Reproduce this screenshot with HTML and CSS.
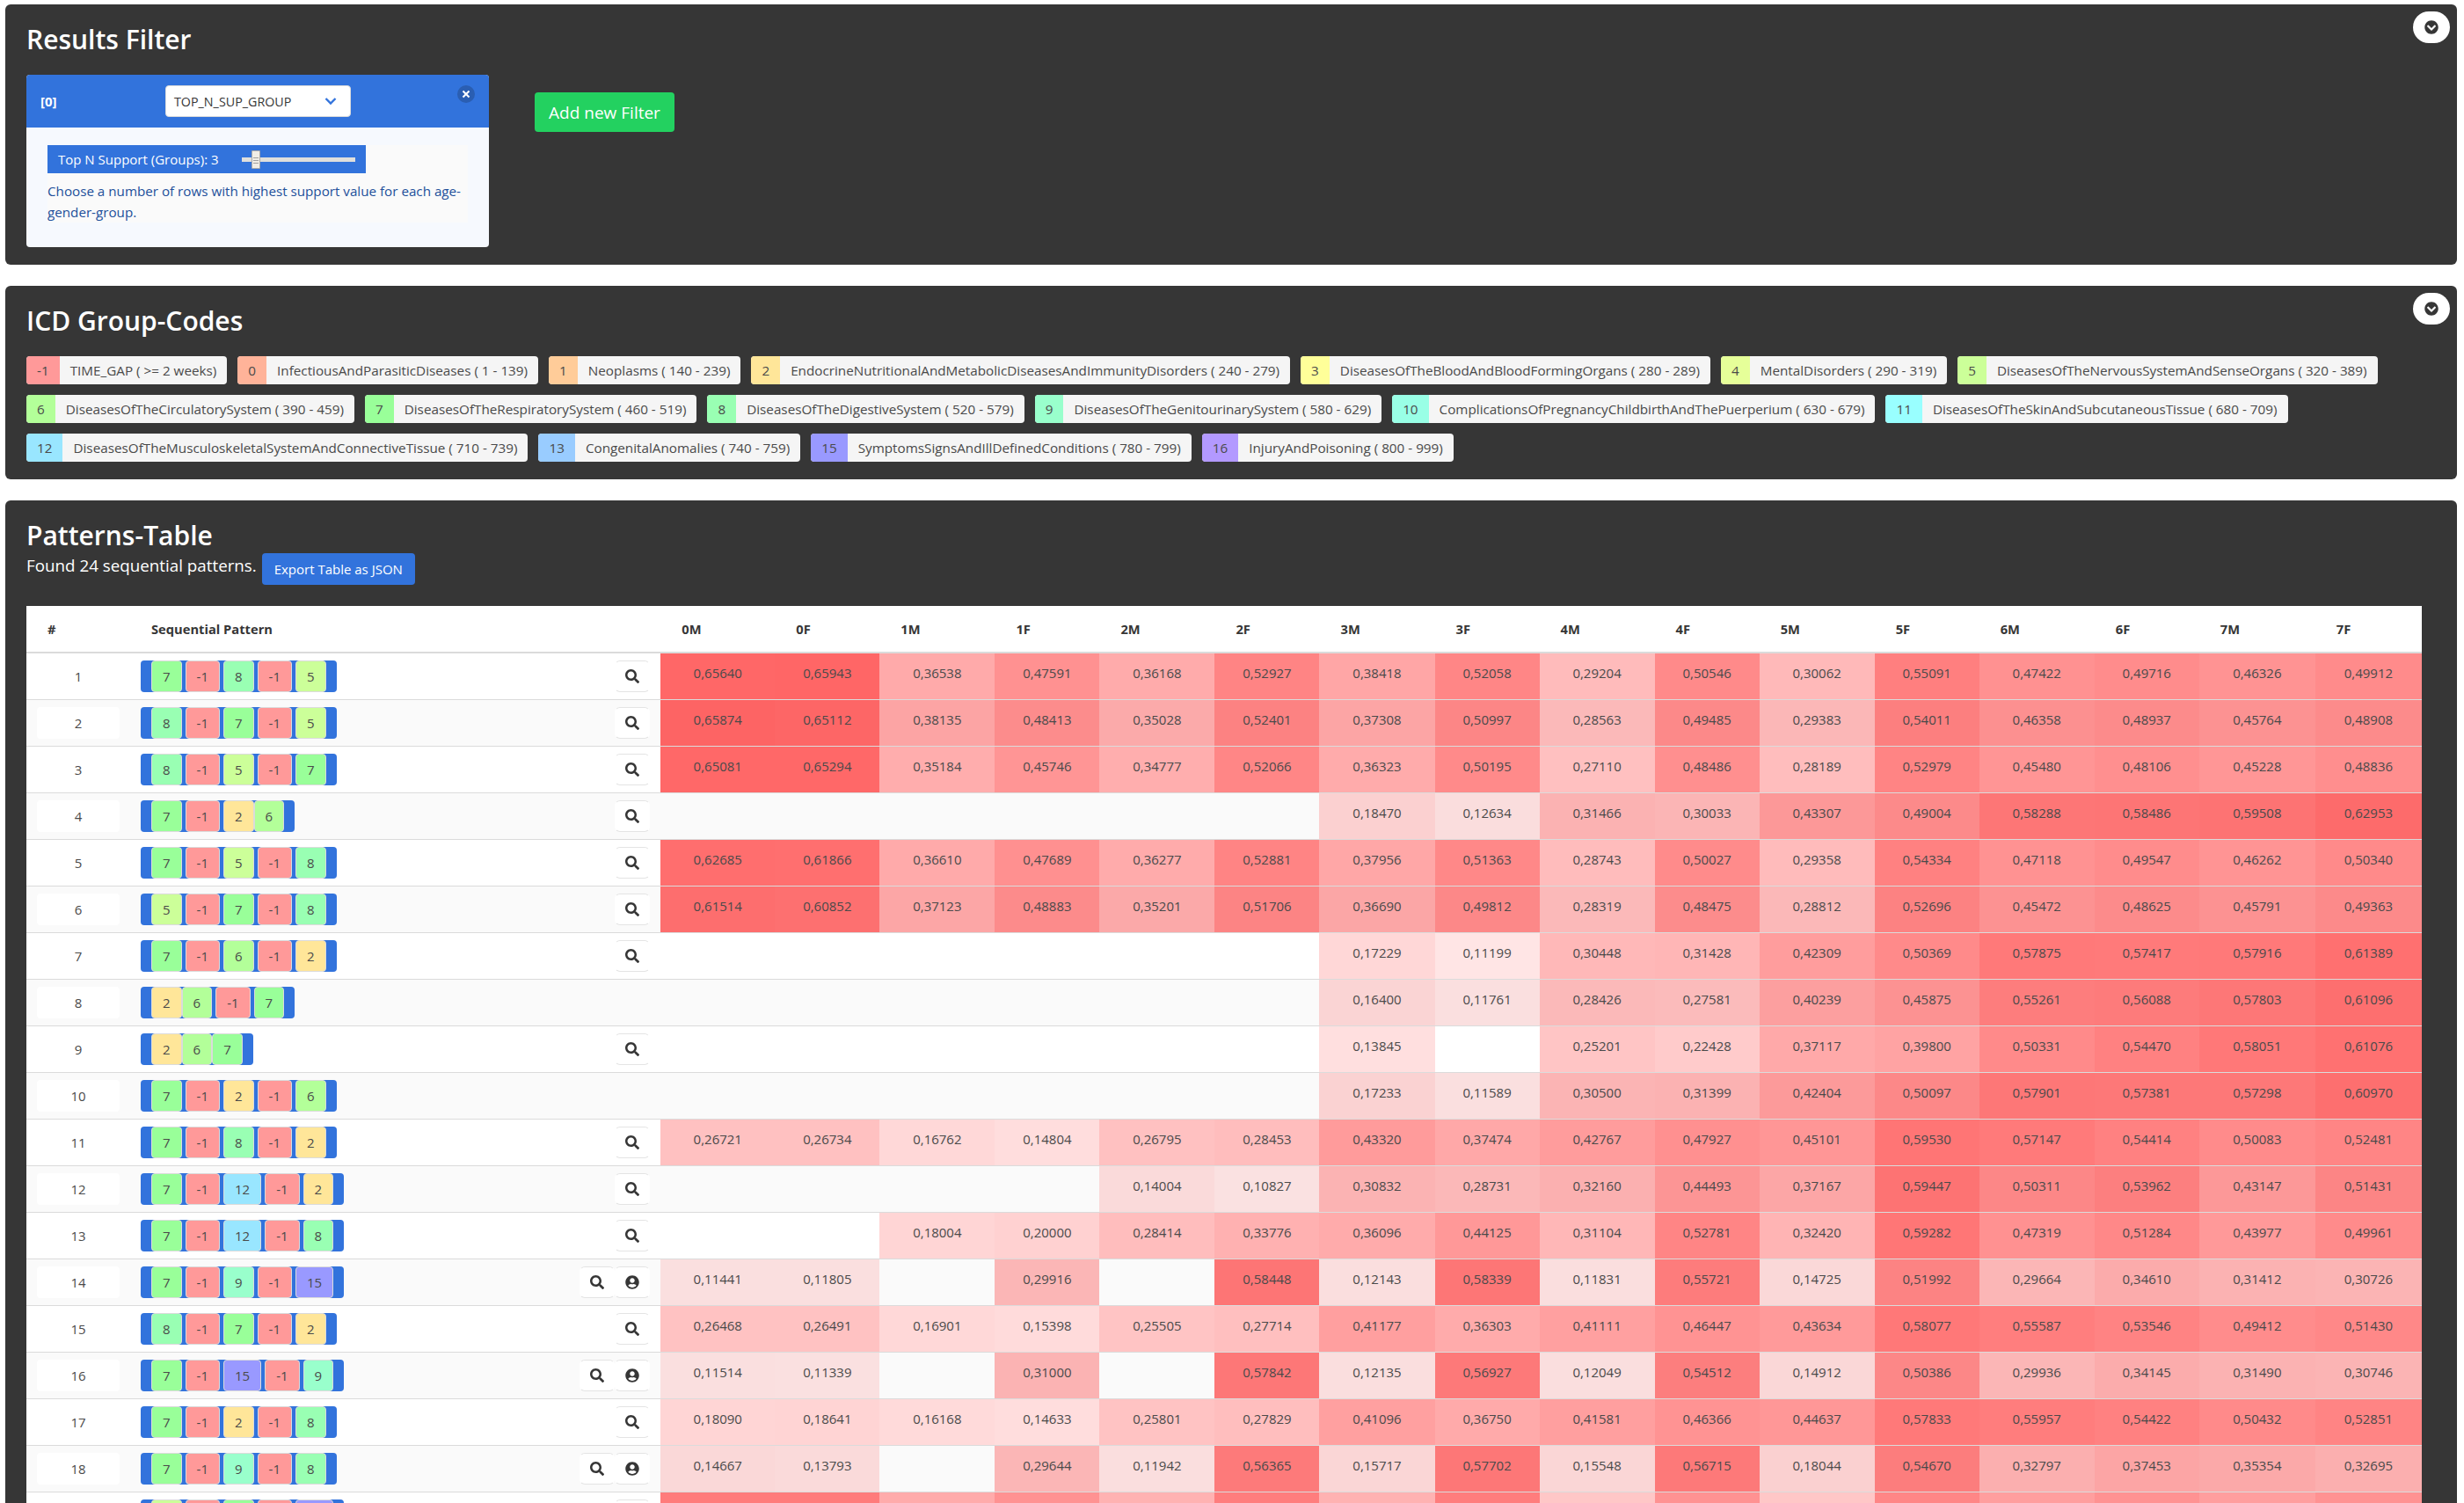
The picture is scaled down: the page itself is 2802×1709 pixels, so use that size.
FILE: index.html
```html
<!DOCTYPE html>
<html lang="en">
<head>
    <meta charset="UTF-8">
    <title>Sequential Patterns</title>
    <link rel="stylesheet" href="styles.css">
</head>
<body>
    <svg class="icon-defs" width="0" height="0">
        <symbol id="i-search" viewBox="0 0 512 512"><path d="M505 442.7L405.3 343c-4.5-4.5-10.6-7-17-7H372c27.6-35.3 44-79.7 44-128C416 93.1 322.9 0 208 0S0 93.1 0 208s93.1 208 208 208c48.3 0 92.7-16.4 128-44v16.3c0 6.4 2.5 12.5 7 17l99.7 99.7c9.4 9.4 24.6 9.4 33.9 0l28.3-28.3c9.4-9.4 9.4-24.6.1-34zM208 336c-70.7 0-128-57.2-128-128 0-70.7 57.2-128 128-128 70.7 0 128 57.2 128 128 0 70.7-57.2 128-128 128z"/></symbol>
        <symbol id="i-user" viewBox="0 0 496 512"><path d="M248 8C111 8 0 119 0 256s111 248 248 248 248-111 248-248S385 8 248 8zm0 96c48.6 0 88 39.4 88 88s-39.4 88-88 88-88-39.4-88-88 39.4-88 88-88zm0 344c-58.7 0-111.3-26.6-146.5-68.2 18.8-35.4 55.6-59.8 98.5-59.8 2.4 0 4.8.4 7.1 1.1 13 4.2 26.6 6.9 40.9 6.9 14.3 0 28-2.7 40.9-6.9 2.3-.7 4.7-1.1 7.1-1.1 42.9 0 79.7 24.4 98.5 59.8C359.3 421.4 306.7 448 248 448z"/></symbol>
        <symbol id="i-collapse" viewBox="0 0 512 512"><path d="M504 256c0 137-111 248-248 248S8 393 8 256 119 8 256 8s248 111 248 248zM273 369.9l135.5-135.5c9.4-9.4 9.4-24.6 0-33.9l-17-17c-9.4-9.4-24.6-9.4-33.9 0L256 285.1 154.4 183.5c-9.4-9.4-24.6-9.4-33.9 0l-17 17c-9.4 9.4-9.4 24.6 0 33.9L239 369.9c9.4 9.4 24.6 9.4 34 0z"/></symbol>
    </svg>

    <!-- Filter -->
    <section class="panel">
        <button class="collapse-btn"><svg class="icon"><use href="#i-collapse"/></svg></button>
        <h2 class="panel-title">Results Filter</h2>
        <div class="filter-row">
            <div class="filter-card">
                <div class="filter-head">
                    <span class="filter-index">[0]</span>
                    <div class="filter-select">
                        TOP_N_SUP_GROUP
                        <svg class="select-arrow" viewBox="0 0 14 10"><path d="M1.5 2 L7 7.5 L12.5 2" /></svg>
                    </div>
                    <button class="filter-delete"></button>
                </div>
                <div class="filter-body">
                    <div class="filter-inner">
                        <div class="range-bar">
                            <span>Top N Support (Groups): 3</span>
                            <input class="range-input" type="range" min="1" max="21" value="3">
                        </div>
                        <p class="filter-help">Choose a number of rows with highest support value for each age-gender-group.</p>
                    </div>
                </div>
            </div>
            <button class="add-filter-btn">Add new Filter</button>
        </div>
    </section>

    <!-- ICD codes -->
    <section class="panel">
        <button class="collapse-btn"><svg class="icon"><use href="#i-collapse"/></svg></button>
        <h2 class="panel-title">ICD Group-Codes</h2>
        <div class="tag-list">
            <div class="tag"><span class="tag-num c-gap">-1</span><span class="tag-name">TIME_GAP ( &gt;= 2 weeks)</span></div>
            <div class="tag"><span class="tag-num c0">0</span><span class="tag-name">InfectiousAndParasiticDiseases ( 1 - 139)</span></div>
            <div class="tag"><span class="tag-num c1">1</span><span class="tag-name">Neoplasms ( 140 - 239)</span></div>
            <div class="tag"><span class="tag-num c2">2</span><span class="tag-name">EndocrineNutritionalAndMetabolicDiseasesAndImmunityDisorders ( 240 - 279)</span></div>
            <div class="tag"><span class="tag-num c3">3</span><span class="tag-name">DiseasesOfTheBloodAndBloodFormingOrgans ( 280 - 289)</span></div>
            <div class="tag"><span class="tag-num c4">4</span><span class="tag-name">MentalDisorders ( 290 - 319)</span></div>
            <div class="tag"><span class="tag-num c5">5</span><span class="tag-name">DiseasesOfTheNervousSystemAndSenseOrgans ( 320 - 389)</span></div>
            <div class="tag"><span class="tag-num c6">6</span><span class="tag-name">DiseasesOfTheCirculatorySystem ( 390 - 459)</span></div>
            <div class="tag"><span class="tag-num c7">7</span><span class="tag-name">DiseasesOfTheRespiratorySystem ( 460 - 519)</span></div>
            <div class="tag"><span class="tag-num c8">8</span><span class="tag-name">DiseasesOfTheDigestiveSystem ( 520 - 579)</span></div>
            <div class="tag"><span class="tag-num c9">9</span><span class="tag-name">DiseasesOfTheGenitourinarySystem ( 580 - 629)</span></div>
            <div class="tag"><span class="tag-num c10">10</span><span class="tag-name">ComplicationsOfPregnancyChildbirthAndThePuerperium ( 630 - 679)</span></div>
            <div class="tag"><span class="tag-num c11">11</span><span class="tag-name">DiseasesOfTheSkinAndSubcutaneousTissue ( 680 - 709)</span></div>
            <div class="tag"><span class="tag-num c12">12</span><span class="tag-name">DiseasesOfTheMusculoskeletalSystemAndConnectiveTissue ( 710 - 739)</span></div>
            <div class="tag"><span class="tag-num c13">13</span><span class="tag-name">CongenitalAnomalies ( 740 - 759)</span></div>
            <div class="tag"><span class="tag-num c15">15</span><span class="tag-name">SymptomsSignsAndIllDefinedConditions ( 780 - 799)</span></div>
            <div class="tag"><span class="tag-num c16">16</span><span class="tag-name">InjuryAndPoisoning ( 800 - 999)</span></div>
        </div>
    </section>

    <!-- Patterns -->
    <section class="panel">
        <h2 class="panel-title panel-title-tight">Patterns-Table</h2>
        <div class="found-row">
            <span class="found-text">Found 24 sequential patterns.</span>
            <button class="export-btn">Export Table as JSON</button>
        </div>
        <table class="patterns-table">
            <colgroup>
                <col class="col-index"><col class="col-pattern">
                <col class="col-first-m"><col class="col-f">
                <col class="col-m"><col class="col-f">
                <col class="col-m"><col class="col-f">
                <col class="col-m"><col class="col-f">
                <col class="col-m"><col class="col-f">
                <col class="col-m"><col class="col-f">
                <col class="col-m"><col class="col-f">
                <col class="col-last-m"><col class="col-last-f">
            </colgroup>
            <thead>
                <tr>
                    <th>#</th><th>Sequential Pattern</th>
                    <th>0M</th><th>0F</th><th>1M</th><th>1F</th><th>2M</th><th>2F</th><th>3M</th><th>3F</th>
                    <th>4M</th><th>4F</th><th>5M</th><th>5F</th><th>6M</th><th>6F</th><th>7M</th><th>7F</th>
                </tr>
            </thead>
            <tbody id="patterns-body"></tbody>
        </table>
    </section>

    <script src="script.js"></script>
</body>
</html>
```

FILE: styles.css
```css
html, body {
    height: 100%;
    overflow: hidden;
}
body {
    margin: 0;
    padding: 5px 8px 0 6px;
    box-sizing: border-box;
    background-color: #fff;
    font-family: "Open Sans", "Noto Sans", sans-serif;
    font-size: 15px;
    color: #4a4a4a;
}
button {
    font-family: inherit;
    cursor: pointer;
}
.icon-defs {
    position: absolute;
}
.icon {
    width: 16px;
    height: 16px;
    fill: #363636;
    display: block;
}

/* panels */
.panel {
    position: relative;
    background-color: #363636;
    border-radius: 6px;
    padding: 22px 24px 20px 24px;
    margin-bottom: 24px;
}
.panel-title {
    margin: 0 0 22px 0;
    font-size: 30px;
    line-height: 36px;
    font-weight: 600;
    color: #fff;
}
.panel-title-tight {
    margin-bottom: 2px;
}
.collapse-btn {
    position: absolute;
    top: 8px;
    right: 8px;
    width: 42px;
    height: 36px;
    border: none;
    border-radius: 18px;
    background-color: #fff;
    display: flex;
    align-items: center;
    justify-content: center;
    padding: 0;
}

/* filter */
.filter-row {
    display: flex;
    align-items: flex-start;
}
.filter-card {
    width: 526px;
    border-radius: 4px;
    overflow: hidden;
    background-color: #f6f9fe;
}
.filter-head {
    display: flex;
    align-items: flex-start;
    height: 60px;
    box-sizing: border-box;
    padding: 12px 16px;
    background-color: #3273dc;
    color: #fff;
}
.filter-index {
    width: 142px;
    line-height: 36px;
    font-size: 15px;
    font-weight: 700;
}
.filter-select {
    width: 211px;
    height: 36px;
    box-sizing: border-box;
    display: flex;
    align-items: center;
    justify-content: space-between;
    padding: 0 15px 0 9px;
    background-color: #fff;
    border: 1px solid #dbdbdb;
    border-radius: 4px;
    font-size: 14.3px;
    color: #363636;
}
.select-arrow {
    width: 14px;
    height: 10px;
    fill: none;
    stroke: #3273dc;
    stroke-width: 2.4;
}
.filter-delete {
    position: relative;
    width: 20px;
    height: 20px;
    margin-left: auto;
    padding: 0;
    border: none;
    border-radius: 50%;
    background-color: rgba(10, 10, 10, 0.2);
}
.filter-delete::before,
.filter-delete::after {
    content: "";
    position: absolute;
    top: 50%;
    left: 50%;
    background-color: #fff;
    transform: translate(-50%, -50%) rotate(45deg);
}
.filter-delete::before {
    width: 10px;
    height: 2px;
}
.filter-delete::after {
    width: 2px;
    height: 10px;
}
.filter-body {
    padding: 20px 24px 28px 24px;
}
.filter-inner {
    background-color: #fafafa;
}
.range-bar {
    display: inline-flex;
    align-items: center;
    gap: 26px;
    height: 32px;
    padding: 0 12px;
    background-color: #3273dc;
    color: #fff;
    font-size: 15px;
    vertical-align: top;
}
.range-input {
    -webkit-appearance: none;
    appearance: none;
    width: 129px;
    height: 22px;
    margin: 0;
    background: transparent;
}
.range-input::-webkit-slider-runnable-track {
    height: 5px;
    background-color: #e0dfdc;
}
.range-input::-webkit-slider-thumb {
    -webkit-appearance: none;
    width: 10px;
    height: 21px;
    margin-top: -8px;
    border: 1px solid #a9a9a9;
    border-radius: 1px;
    box-sizing: border-box;
    background: linear-gradient(#a0a0a0, #a0a0a0) center 7px / 6px 1px no-repeat,
                linear-gradient(#a0a0a0, #a0a0a0) center 10px / 6px 1px no-repeat,
                linear-gradient(#a0a0a0, #a0a0a0) center 13px / 6px 1px no-repeat,
                #f0ede6;
}
.filter-help {
    margin: 8px 0 0 0;
    font-size: 15.2px;
    line-height: 24px;
    color: #22509a;
}
.add-filter-btn {
    width: 159px;
    height: 45px;
    margin: 20px 0 0 52px;
    padding: 0;
    border: none;
    border-radius: 4px;
    background-color: #23d160;
    color: #fff;
    font-size: 19px;
}

/* tags */
.tag-list {
    display: flex;
    flex-wrap: wrap;
    gap: 12px;
}
.tag {
    display: flex;
    height: 32px;
    line-height: 32px;
    font-size: 15.25px;
    border-radius: 4px;
    overflow: hidden;
    background-color: #f5f5f5;
}
.tag-num, .tag-name {
    padding: 0 12px;
}

/* code colors */
.c-gap { background-color: #ff9999; }
.c0 { background-color: #ffb399; }
.c1 { background-color: #ffcc99; }
.c2 { background-color: #ffe699; }
.c3 { background-color: #ffff99; }
.c4 { background-color: #e6ff99; }
.c5 { background-color: #ccff99; }
.c6 { background-color: #b3ff99; }
.c7 { background-color: #99ff99; }
.c8 { background-color: #99ffb3; }
.c9 { background-color: #99ffcc; }
.c10 { background-color: #99ffe6; }
.c11 { background-color: #99ffff; }
.c12 { background-color: #99e6ff; }
.c13 { background-color: #99ccff; }
.c15 { background-color: #9999ff; }
.c16 { background-color: #b399ff; }

/* table */
.found-row {
    display: flex;
    align-items: flex-start;
    gap: 6px;
    margin-bottom: 24px;
}
.found-text {
    font-size: 18.8px;
    line-height: 28px;
    color: #fff;
}
.export-btn {
    height: 36px;
    width: 174px;
    padding: 0;
    border: none;
    border-radius: 4px;
    background-color: #3273dc;
    color: #fff;
    font-size: 15px;
}
.patterns-table {
    width: 2724px;
    table-layout: fixed;
    border-collapse: separate;
    border-spacing: 0;
    background-color: #fff;
    color: #4a4a4a;
}
.col-index { width: 118px; }
.col-pattern { width: 603px; }
.col-first-m { width: 130px; }
.col-m { width: 131px; }
.col-f { width: 119px; }
.col-last-m { width: 132px; }
.col-last-f { width: 121px; }
.patterns-table th {
    height: 54px;
    padding: 0 0 0 24px;
    box-sizing: border-box;
    border-bottom: 2px solid #dbdbdb;
    text-align: left;
    font-size: 14.7px;
    font-weight: 700;
    color: #363636;
}
.patterns-table td {
    padding: 8px 12px;
    border-bottom: 1px solid #dbdbdb;
}
.patterns-table tbody tr:nth-child(even) {
    background-color: #fafafa;
}
.patterns-table td.heat-cell {
    padding: 10px 0 0 0;
    vertical-align: top;
    text-align: center;
    line-height: 24px;
}
.index-box {
    height: 36px;
    line-height: 36px;
    border-radius: 4px;
    background-color: #fff;
    text-align: center;
}
.pattern-cell {
    display: flex;
    justify-content: space-between;
}
.pattern-box {
    display: flex;
    height: 36px;
    padding: 0 12px;
    border-radius: 4px;
    background-color: #3273dc;
}
.pattern-item {
    box-sizing: border-box;
    height: 36px;
    line-height: 34px;
    padding: 0 12px;
    border: 1px solid #dbdbdb;
    border-radius: 4px;
}
.pattern-item.c-gap {
    margin: 0 4px;
}
.action-group {
    display: flex;
}
.action-btn {
    width: 40px;
    height: 36px;
    padding: 0;
    display: flex;
    align-items: center;
    justify-content: center;
    background-color: #fff;
    border: 1px solid #e4e4e4;
    border-left-color: #fff;
    border-right-color: #fff;
    border-radius: 6px;
}
```

FILE: script.js
```js
// rows: [pattern, has search button, has user button, values]
const rows = [
    ['7 -1 8 -1 5', 1, 0, '65640 65943 36538 47591 36168 52927 38418 52058 29204 50546 30062 55091 47422 49716 46326 49912'],
    ['8 -1 7 -1 5', 1, 0, '65874 65112 38135 48413 35028 52401 37308 50997 28563 49485 29383 54011 46358 48937 45764 48908'],
    ['8 -1 5 -1 7', 1, 0, '65081 65294 35184 45746 34777 52066 36323 50195 27110 48486 28189 52979 45480 48106 45228 48836'],
    ['7 -1 2 6', 1, 0, '- - - - - - 18470 12634 31466 30033 43307 49004 58288 58486 59508 62953'],
    ['7 -1 5 -1 8', 1, 0, '62685 61866 36610 47689 36277 52881 37956 51363 28743 50027 29358 54334 47118 49547 46262 50340'],
    ['5 -1 7 -1 8', 1, 0, '61514 60852 37123 48883 35201 51706 36690 49812 28319 48475 28812 52696 45472 48625 45791 49363'],
    ['7 -1 6 -1 2', 1, 0, '- - - - - - 17229 11199 30448 31428 42309 50369 57875 57417 57916 61389'],
    ['2 6 -1 7', 0, 0, '- - - - - - 16400 11761 28426 27581 40239 45875 55261 56088 57803 61096'],
    ['2 6 7', 1, 0, '- - - - - - 13845 - 25201 22428 37117 39800 50331 54470 58051 61076'],
    ['7 -1 2 -1 6', 0, 0, '- - - - - - 17233 11589 30500 31399 42404 50097 57901 57381 57298 60970'],
    ['7 -1 8 -1 2', 1, 0, '26721 26734 16762 14804 26795 28453 43320 37474 42767 47927 45101 59530 57147 54414 50083 52481'],
    ['7 -1 12 -1 2', 1, 0, '- - - - 14004 10827 30832 28731 32160 44493 37167 59447 50311 53962 43147 51431'],
    ['7 -1 12 -1 8', 1, 0, '- - 18004 20000 28414 33776 36096 44125 31104 52781 32420 59282 47319 51284 43977 49961'],
    ['7 -1 9 -1 15', 1, 1, '11441 11805 - 29916 - 58448 12143 58339 11831 55721 14725 51992 29664 34610 31412 30726'],
    ['8 -1 7 -1 2', 1, 0, '26468 26491 16901 15398 25505 27714 41177 36303 41111 46447 43634 58077 55587 53546 49412 51430'],
    ['7 -1 15 -1 9', 1, 1, '11514 11339 - 31000 - 57842 12135 56927 12049 54512 14912 50386 29936 34145 31490 30746'],
    ['7 -1 2 -1 8', 1, 0, '18090 18641 16168 14633 25801 27829 41096 36750 41581 46366 44637 57833 55957 54422 50432 52851'],
    ['7 -1 9 -1 8', 1, 1, '14667 13793 - 29644 11942 56365 15717 57702 15548 56715 18044 54670 32797 37453 35354 32695']
];

// only the top edge of the 19th row is on screen, no numbers
const lastRowShades = [.57, .57, .36, .47, .33, .56, .33, .56, .24, .47, .24, .52, .42, .47, .42, .47];

function shade(value) {
    return 'rgba(255, 0, 0, ' + (value * 0.91).toFixed(3) + ')';
}

function patternHtml(pattern) {
    return pattern.split(' ').map(code => {
        const cls = code === '-1' ? 'c-gap' : 'c' + code;
        return `<span class="pattern-item ${cls}">${code}</span>`;
    }).join('');
}

function actionHtml(search, user) {
    let html = '';
    if (search) html += '<button class="action-btn"><svg class="icon"><use href="#i-search"/></svg></button>';
    if (user) html += '<button class="action-btn"><svg class="icon"><use href="#i-user"/></svg></button>';
    return html;
}

function rowHtml(index, pattern, search, user, cells) {
    return `<tr>
        <td><div class="index-box">${index}</div></td>
        <td><div class="pattern-cell">
            <div class="pattern-box">${patternHtml(pattern)}</div>
            <div class="action-group">${actionHtml(search, user)}</div>
        </div></td>
        ${cells}
    </tr>`;
}

let html = '';
rows.forEach((row, i) => {
    const cells = row[3].split(' ').map(v => {
        if (v === '-') return '<td class="heat-cell"></td>';
        return `<td class="heat-cell" style="background-color: ${shade(parseFloat('0.' + v))}">0,${v}</td>`;
    }).join('');
    html += rowHtml(i + 1, row[0], row[1], row[2], cells);
});
html += rowHtml(19, '5 -1 7 -1 15', 1, 0, lastRowShades.map(v =>
    `<td class="heat-cell" style="background-color: ${shade(v)}"></td>`).join(''));

document.getElementById('patterns-body').innerHTML = html;
```
